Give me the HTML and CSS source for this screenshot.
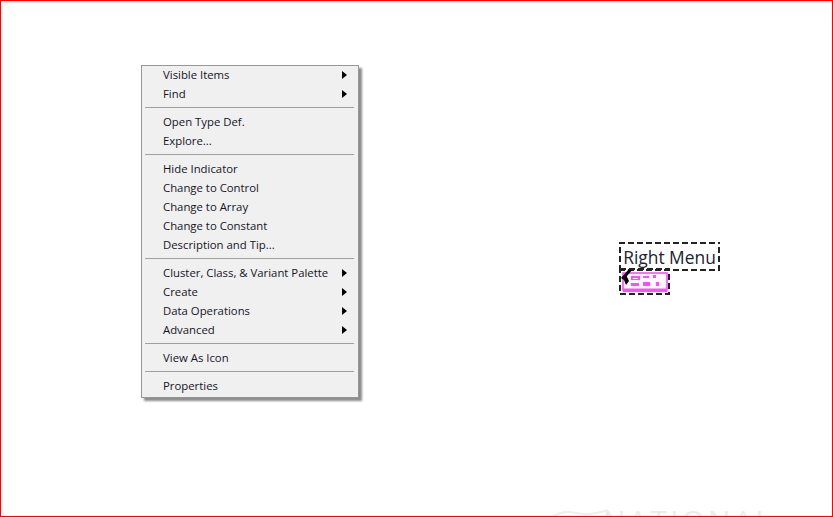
FILE: index.html
```html
<!DOCTYPE html>
<html lang="en">
<head>
    <meta charset="UTF-8">
    <title>Right Menu</title>
    <link rel="stylesheet" href="styles.css">
</head>
<body>
    <div class="frame">
        <ul class="menu">
            <li class="item sub">Visible Items</li>
            <li class="item sub">Find</li>
            <li class="sep"></li>
            <li class="item">Open Type Def.</li>
            <li class="item">Explore...</li>
            <li class="sep"></li>
            <li class="item">Hide Indicator</li>
            <li class="item">Change to Control</li>
            <li class="item">Change to Array</li>
            <li class="item">Change to Constant</li>
            <li class="item">Description and Tip...</li>
            <li class="sep"></li>
            <li class="item sub">Cluster, Class, &amp; Variant Palette</li>
            <li class="item sub">Create</li>
            <li class="item sub">Data Operations</li>
            <li class="item sub">Advanced</li>
            <li class="sep"></li>
            <li class="item">View As Icon</li>
            <li class="sep"></li>
            <li class="item">Properties</li>
        </ul>

        <div class="node">
            <div class="label">Right Menu</div>
            <svg class="terminal" width="53" height="28" viewBox="0 0 53 28">
                <rect x="4" y="5" width="44" height="17" fill="#fff6ff" stroke="#ff4cff" stroke-width="1.6"/>
                <rect x="4" y="20.5" width="44" height="3.5" fill="#ff4cff"/>
                <path d="M12 8h9v4h-9zM24 8h6v2h-6zM34 7h3v3h-3zM12 15h8v3h-8zM24 14h7v4h-7zM37 14h3v4h-3z" fill="#ff4cff"/>
                <path d="M14 10h5v1h-5z" fill="#fff"/>
                <path d="M2 10L10 1L14 1L8 8L8 9L10 13L7 17L5 12z" fill="#000"/>
                <rect x="1" y="1" width="49" height="25" fill="none" stroke="#222" stroke-width="2" stroke-dasharray="6 3"/>
            </svg>
        </div>

        <svg class="logo-arc" width="60" height="12" viewBox="0 0 60 12">
            <path d="M2 12Q12 5 26 8T58 5" fill="none" stroke="#eeeeee" stroke-width="2"/>
        </svg>
        <div class="watermark">NATIONAL</div>
    </div>
</body>
</html>
```

FILE: styles.css
```css
html, body {
    margin: 0;
    height: 100%;
}
body {
    font-family: "Open Sans", "Noto Sans", Arial, sans-serif;
    background-color: #fff;
    color: #15151f;
    overflow: hidden;
}
.frame {
    position: relative;
    box-sizing: border-box;
    width: 833px;
    height: 517px;
    border: 1px solid #f00;
    overflow: hidden;
    display: flex;
    align-items: flex-start;
    padding: 64px 0 0 140px;
}
.menu {
    list-style: none;
    box-sizing: border-box;
    width: 218px;
    height: 333px;
    margin: 0;
    padding: 0 4px 0 2px;
    background-color: #f0f0f0;
    border: 1px solid #979797;
    box-shadow: 3px 3px 2px rgba(0, 0, 0, 0.45);
}
.item {
    position: relative;
    height: 19px;
    line-height: 17px;
    padding-left: 19px;
    font-size: 11.35px;
    white-space: nowrap;
}
.sub::after {
    content: "";
    position: absolute;
    left: 198px;
    top: 5px;
    border-left: 5px solid #000;
    border-top: 4.5px solid transparent;
    border-bottom: 4.5px solid transparent;
}
.sep {
    height: 1px;
    margin: 3px 0 5px 1px;
    background-color: #a0a0a0;
}
.node {
    margin: 177px 0 0 260px;
}
.label {
    box-sizing: border-box;
    width: 101px;
    height: 29px;
    line-height: 30px;
    text-align: center;
    font-size: 17.4px;
    color: #222230;
    background:
        repeating-linear-gradient(90deg, #222 0 6px, transparent 6px 9px) top / 100% 2px no-repeat,
        repeating-linear-gradient(90deg, #222 0 6px, transparent 6px 9px) bottom / 100% 2px no-repeat,
        repeating-linear-gradient(0deg, #222 0 6px, transparent 6px 9px) left / 2px 100% no-repeat,
        repeating-linear-gradient(0deg, #222 0 6px, transparent 6px 9px) right / 2px 100% no-repeat;
}
.terminal {
    display: block;
    margin-top: -3px;
}
.logo-arc {
    position: absolute;
    left: 549px;
    top: 504px;
}
.watermark {
    position: absolute;
    left: 602px;
    top: 500px;
    font-size: 30px;
    line-height: 40px;
    letter-spacing: 3px;
    color: #ececec;
}
```
